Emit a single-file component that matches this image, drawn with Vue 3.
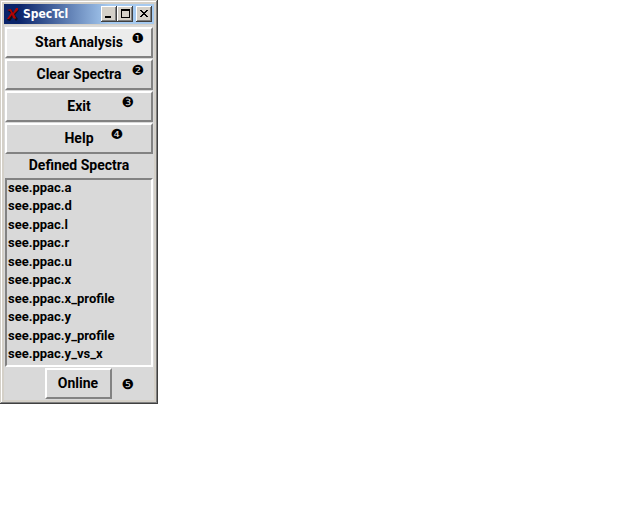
<script setup>
import { ref } from 'vue'

const spectra = ['a', 'd', 'l', 'r', 'u', 'x', 'x_profile', 'y', 'y_profile', 'y_vs_x'].map(
  (name) => `see.ppac.${name}`
)
const actions = [
  { label: 'Start Analysis', mark: '❶', place: 'far', active: true },
  { label: 'Clear Spectra', mark: '❷', place: 'far' },
  { label: 'Exit', mark: '❸', place: 'mid' },
  { label: 'Help', mark: '❹', place: 'near' }
]
const selected = ref('')
</script>

<template>
  <main class="window">
    <header class="titlebar">
      <svg class="logo" viewBox="0 0 12 14" aria-hidden="true">
        <path d="M1 4L4 2L7 6L10 2L12 3L8 8L11 12L9 14L6 10L3 14L0 13L5 7Z" fill="#10101c" />
        <path d="M0 3L4 2L6 6L9 1L11 1L11 3L7 7L9 11L8 12L6 11L5 8L2 12L0 12L4 6L3 4Z" fill="#b00404" />
      </svg>
      <h1 class="title">SpecTcl</h1>
      <div class="controls">
        <button class="control" type="button" aria-label="Minimize">
          <svg viewBox="0 0 16 16"><path d="M4 10H10V12H4Z" /></svg>
        </button>
        <button class="control" type="button" aria-label="Maximize">
          <svg viewBox="0 0 16 16"><path fill-rule="evenodd" d="M4 3H13V12H4ZM5 5V11H12V5Z" /></svg>
        </button>
        <button class="control close" type="button" aria-label="Close">
          <svg viewBox="0 0 16 16">
            <path d="M4 4H6V5H7V6H9V5H10V4H12V5H11V6H10V7H9V8H10V9H11V10H12V11H10V10H9V9H7V10H6V11H4V10H5V9H6V8H7V7H6V6H5V5H4Z" />
          </svg>
        </button>
      </div>
    </header>

    <section class="content">
      <div class="actions">
        <div v-for="action in actions" :key="action.label" class="row">
          <button class="push" :class="{ active: action.active }" type="button">{{ action.label }}</button>
          <span class="mark" :class="action.place">{{ action.mark }}</span>
        </div>
      </div>
      <label class="caption" for="spectra">Defined Spectra</label>
      <select id="spectra" v-model="selected" class="list" size="10">
        <option v-for="name in spectra" :key="name" :value="name">{{ name }}</option>
      </select>
      <div class="row footer">
        <button class="push online" type="button">Online</button>
        <span class="mark mid">❺</span>
      </div>
    </section>
  </main>
</template>

<style>
body {
  background: #fff;
}
</style>

<style scoped>
.window {
  box-sizing: border-box;
  width: 158px;
  padding: 4px;
  background: #d4d0c8;
  box-shadow: inset -1px -1px #404040, inset 1px 1px #d4d0c8, inset -2px -2px #808080, inset 2px 2px #fff;
  color: #000;
  font: 700 14px/18px Roboto, "Liberation Sans", sans-serif;
}
.titlebar {
  display: flex;
  align-items: center;
  height: 20px;
  padding: 0 2px 0 3px;
  background: linear-gradient(90deg, #0a246a 10%, #a6caf0 70%);
}
.logo {
  width: 12px;
  height: 14px;
}
.title {
  flex: 1;
  margin: 0 0 0 4px;
  color: #fff;
  font: 700 12px/14px "DejaVu Sans Condensed", "DejaVu Sans", sans-serif;
}
.controls {
  display: flex;
}
.control {
  box-sizing: border-box;
  width: 16px;
  height: 16px;
  padding: 0;
  border: 0;
  background: #d4d0c8;
  box-shadow: inset -1px -1px #404040, inset 1px 1px #fff, inset -2px -2px #808080;
}
.control svg {
  display: block;
  width: 16px;
  height: 16px;
  shape-rendering: crispEdges;
}
.close {
  margin-left: 3px;
}
.content {
  display: flex;
  flex-direction: column;
  margin-top: 1px;
  padding: 2px 1px 1px;
  background: #d9d9d9;
}
.actions {
  display: flex;
  flex-direction: column;
  gap: 1px;
}
.row {
  position: relative;
  display: flex;
}
.push {
  box-sizing: border-box;
  flex: 1;
  height: 31px;
  padding: 0 0 2px;
  border: 2px solid;
  border-color: #fff #828282 #828282 #fff;
  border-radius: 0;
  background: #d9d9d9;
  color: inherit;
  font: inherit;
}
.push.active {
  background: #ececec;
}
.mark {
  position: absolute;
  top: 4px;
  font: 400 14px/14px "DejaVu Sans", sans-serif;
  pointer-events: none;
}
.far {
  right: 9px;
}
.mid {
  right: 19px;
}
.near {
  right: 30px;
}
.caption {
  padding: 2px 0 4px;
  text-align: center;
}
.list {
  box-sizing: border-box;
  width: 100%;
  height: 189px;
  padding: 0;
  border: 2px solid;
  border-color: #828282 #fff #fff #828282;
  border-radius: 0;
  outline: 0;
  overflow: hidden;
  background: #d9d9d9;
  color: inherit;
  font: inherit;
}
.list option {
  box-sizing: border-box;
  min-height: 18px;
  padding: 0 1px;
  font-size: 13px;
  font-weight: 700;
}
.list option:nth-child(even) {
  min-height: 19px;
}
.footer {
  justify-content: center;
  padding: 1px 2px 0 0;
}
.online {
  flex: 0 0 67px;
}
.footer .mark {
  top: 10px;
}
</style>
